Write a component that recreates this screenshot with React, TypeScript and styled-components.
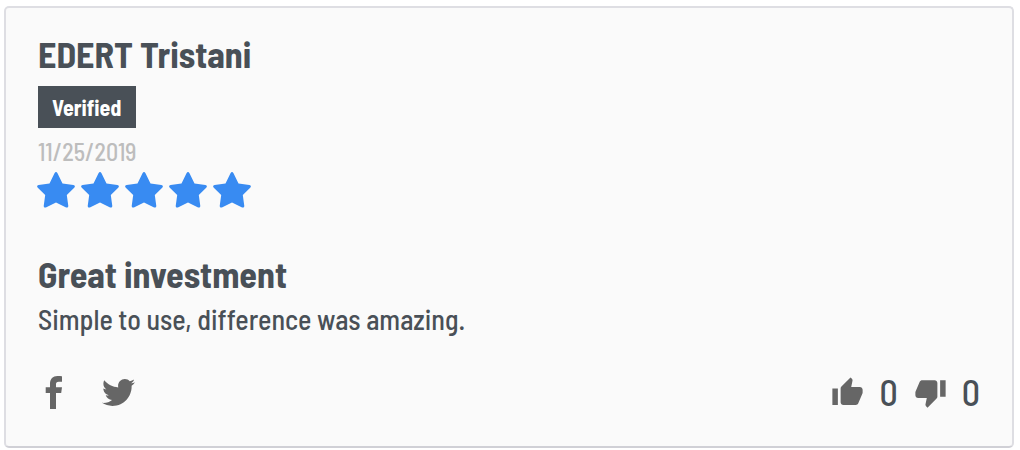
import React from "react";
import styled, { createGlobalStyle } from "styled-components";

const GlobalStyle = createGlobalStyle`
  *, *::before, *::after { box-sizing: border-box; }
  body {
    margin: 0;
    background: #fff;
    color: #495057;
    font-family: "Barlow Semi Condensed", "Liberation Sans Narrow", "Roboto Condensed", "Liberation Sans", sans-serif;
    font-weight: 500;
  }
`;

const Page = styled.main`
  padding: 6px 6px 2px 4px;
`;

const Card = styled.article`
  display: flex;
  flex-direction: column;
  padding: 26px 32px 34px;
  background: #fafafa;
  border: 2px solid #dedee3;
  border-bottom-color: #d0d0d6;
  border-radius: 5px;
`;

const Heading = styled.h2`
  margin: 0;
  font-size: 36px;
  line-height: 40px;
  font-weight: 700;
`;

const Badge = styled.span`
  align-self: flex-start;
  margin-top: 12px;
  padding: 0 15px 0 14px;
  background: #495057;
  color: #fff;
  font-size: 22px;
  line-height: 42px;
  font-weight: 700;
`;

const PostedOn = styled.time`
  margin-top: 8px;
  font-size: 24px;
  line-height: 32px;
  color: #bdbdbd;
`;

const Stars = styled.div`
  display: flex;
  gap: 6px;
  margin: 4px 0 44px -1px;
`;

const Star = styled.svg`
  width: 38px;
  height: 38px;
  fill: #388bf2;
`;

const Body = styled.p`
  margin: 6px 0 0;
  font-size: 28px;
  line-height: 38px;
`;

const Footer = styled.footer`
  display: flex;
  align-items: center;
  justify-content: space-between;
  margin-top: 34px;
`;

const Group = styled.div<{ $gap: number }>`
  display: flex;
  align-items: center;
  gap: ${(p) => p.$gap}px;
`;

const ShareLink = styled.a`
  display: flex;
  color: #666;
`;

const VoteButton = styled.button`
  display: flex;
  align-items: center;
  gap: 15px;
  padding: 0;
  border: 0;
  background: none;
  color: #495057;
  font: inherit;
  font-size: 36px;
  line-height: 40px;
  cursor: pointer;
`;

const Icon = styled.svg`
  width: 33px;
  height: 33px;
  fill: #666;
`;

const ratings = [1, 2, 3, 4, 5];

export default function App() {
  return (
    <>
      <GlobalStyle />
      <Page>
        <Card>
          <Heading>EDERT Tristani</Heading>
          <Badge>Verified</Badge>
          <PostedOn dateTime="2019-11-25">11/25/2019</PostedOn>
          <Stars role="img" aria-label="5 out of 5 stars">
            {ratings.map((n) => (
              <Star key={n} viewBox="0 0 38 38" aria-hidden="true">
                <path d="M17.5 1.2Q19 -1 20.5 1.200L25.500 11.600L36.400 13Q38.900 13.700 37.200 15.700L29.800 23L31.300 33.900Q31.300 36.200 29.100 35.400L19 30.600L8.900 35.400Q6.700 36.200 6.700 33.900L8.200 23L.8 15.700Q-.9 13.700 1.600 13L12.500 11.600Z" />
              </Star>
            ))}
          </Stars>
          <Heading as="h3">Great investment</Heading>
          <Body>Simple to use, difference was amazing.</Body>
          <Footer>
            <Group $gap={31}>
              <ShareLink href="#facebook" aria-label="Share on Facebook">
                <Icon viewBox="0 0 33 33" aria-hidden="true">
                  <path d="M24 .3V5.700H20.700C18.600 5.700 18 6.600 18 8.300V11.300H24L23.200 17H18V33H12V17H7.700V11.300H12V7.600C12 2.900 14.900 0 19.400 0C21.500 0 23.300.1 24 .3Z" />
                </Icon>
              </ShareLink>
              <ShareLink href="#twitter" aria-label="Share on Twitter">
                <Icon viewBox="0 0 512 512" aria-hidden="true">
                  <path d="M459.37 151.716c.325 4.548.325 9.097.325 13.645 0 138.72-105.583 298.558-298.558 298.558-59.452 0-114.68-17.219-161.137-47.106 8.447.974 16.568 1.299 25.34 1.299 49.055 0 94.213-16.568 130.274-44.832-46.132-.975-84.792-31.188-98.112-72.772 6.498.974 12.995 1.624 19.818 1.624 9.421 0 18.843-1.3 27.614-3.573-48.081-9.747-84.143-51.98-84.143-102.985v-1.299c13.969 7.797 30.214 12.67 47.431 13.319-28.264-18.843-46.781-51.005-46.781-87.391 0-19.492 5.197-37.36 14.294-52.954 51.655 63.675 129.3 105.258 216.365 109.807-1.624-7.797-2.599-15.918-2.599-24.04 0-57.828 46.782-104.934 104.934-104.934 30.213 0 57.502 12.67 76.67 33.137 23.715-4.548 46.456-13.32 66.599-25.34-7.798 24.366-24.366 44.833-46.132 57.827 21.117-2.273 41.584-8.122 60.426-16.243-14.292 20.791-32.161 39.308-52.628 54.253z" />
                </Icon>
              </ShareLink>
            </Group>
            <Group $gap={16}>
              <VoteButton type="button" aria-label="Helpful, 0 votes">
                <Icon viewBox="0 0 24 24" aria-hidden="true">
                  <path d="M1 21h4V9H1v12zm22-11c0-1.100-.9-2-2-2h-6.310l.95-4.570.03-.32c0-.41-.17-.79-.44-1.060L14.170 1 7.590 7.590C7.220 7.950 7 8.450 7 9v10c0 1.100.9 2 2 2h9c.83 0 1.540-.5 1.840-1.220l3.020-7.050c.09-.23.14-.47.14-.73v-2z" />
                </Icon>
                0
              </VoteButton>
              <VoteButton type="button" aria-label="Not helpful, 0 votes">
                <Icon viewBox="0 0 24 24" aria-hidden="true">
                  <path d="M15 3H6c-.83 0-1.540.5-1.840 1.220l-3.020 7.050c-.09.23-.14.47-.14.73v2c0 1.100.9 2 2 2h6.310l-.95 4.570-.03.32c0 .41.17.79.44 1.060L9.830 23l6.590-6.590c.36-.36.58-.86.58-1.410V5c0-1.100-.9-2-2-2zm4 0v12h4V3h-4z" />
                </Icon>
                0
              </VoteButton>
            </Group>
          </Footer>
        </Card>
      </Page>
    </>
  );
}
